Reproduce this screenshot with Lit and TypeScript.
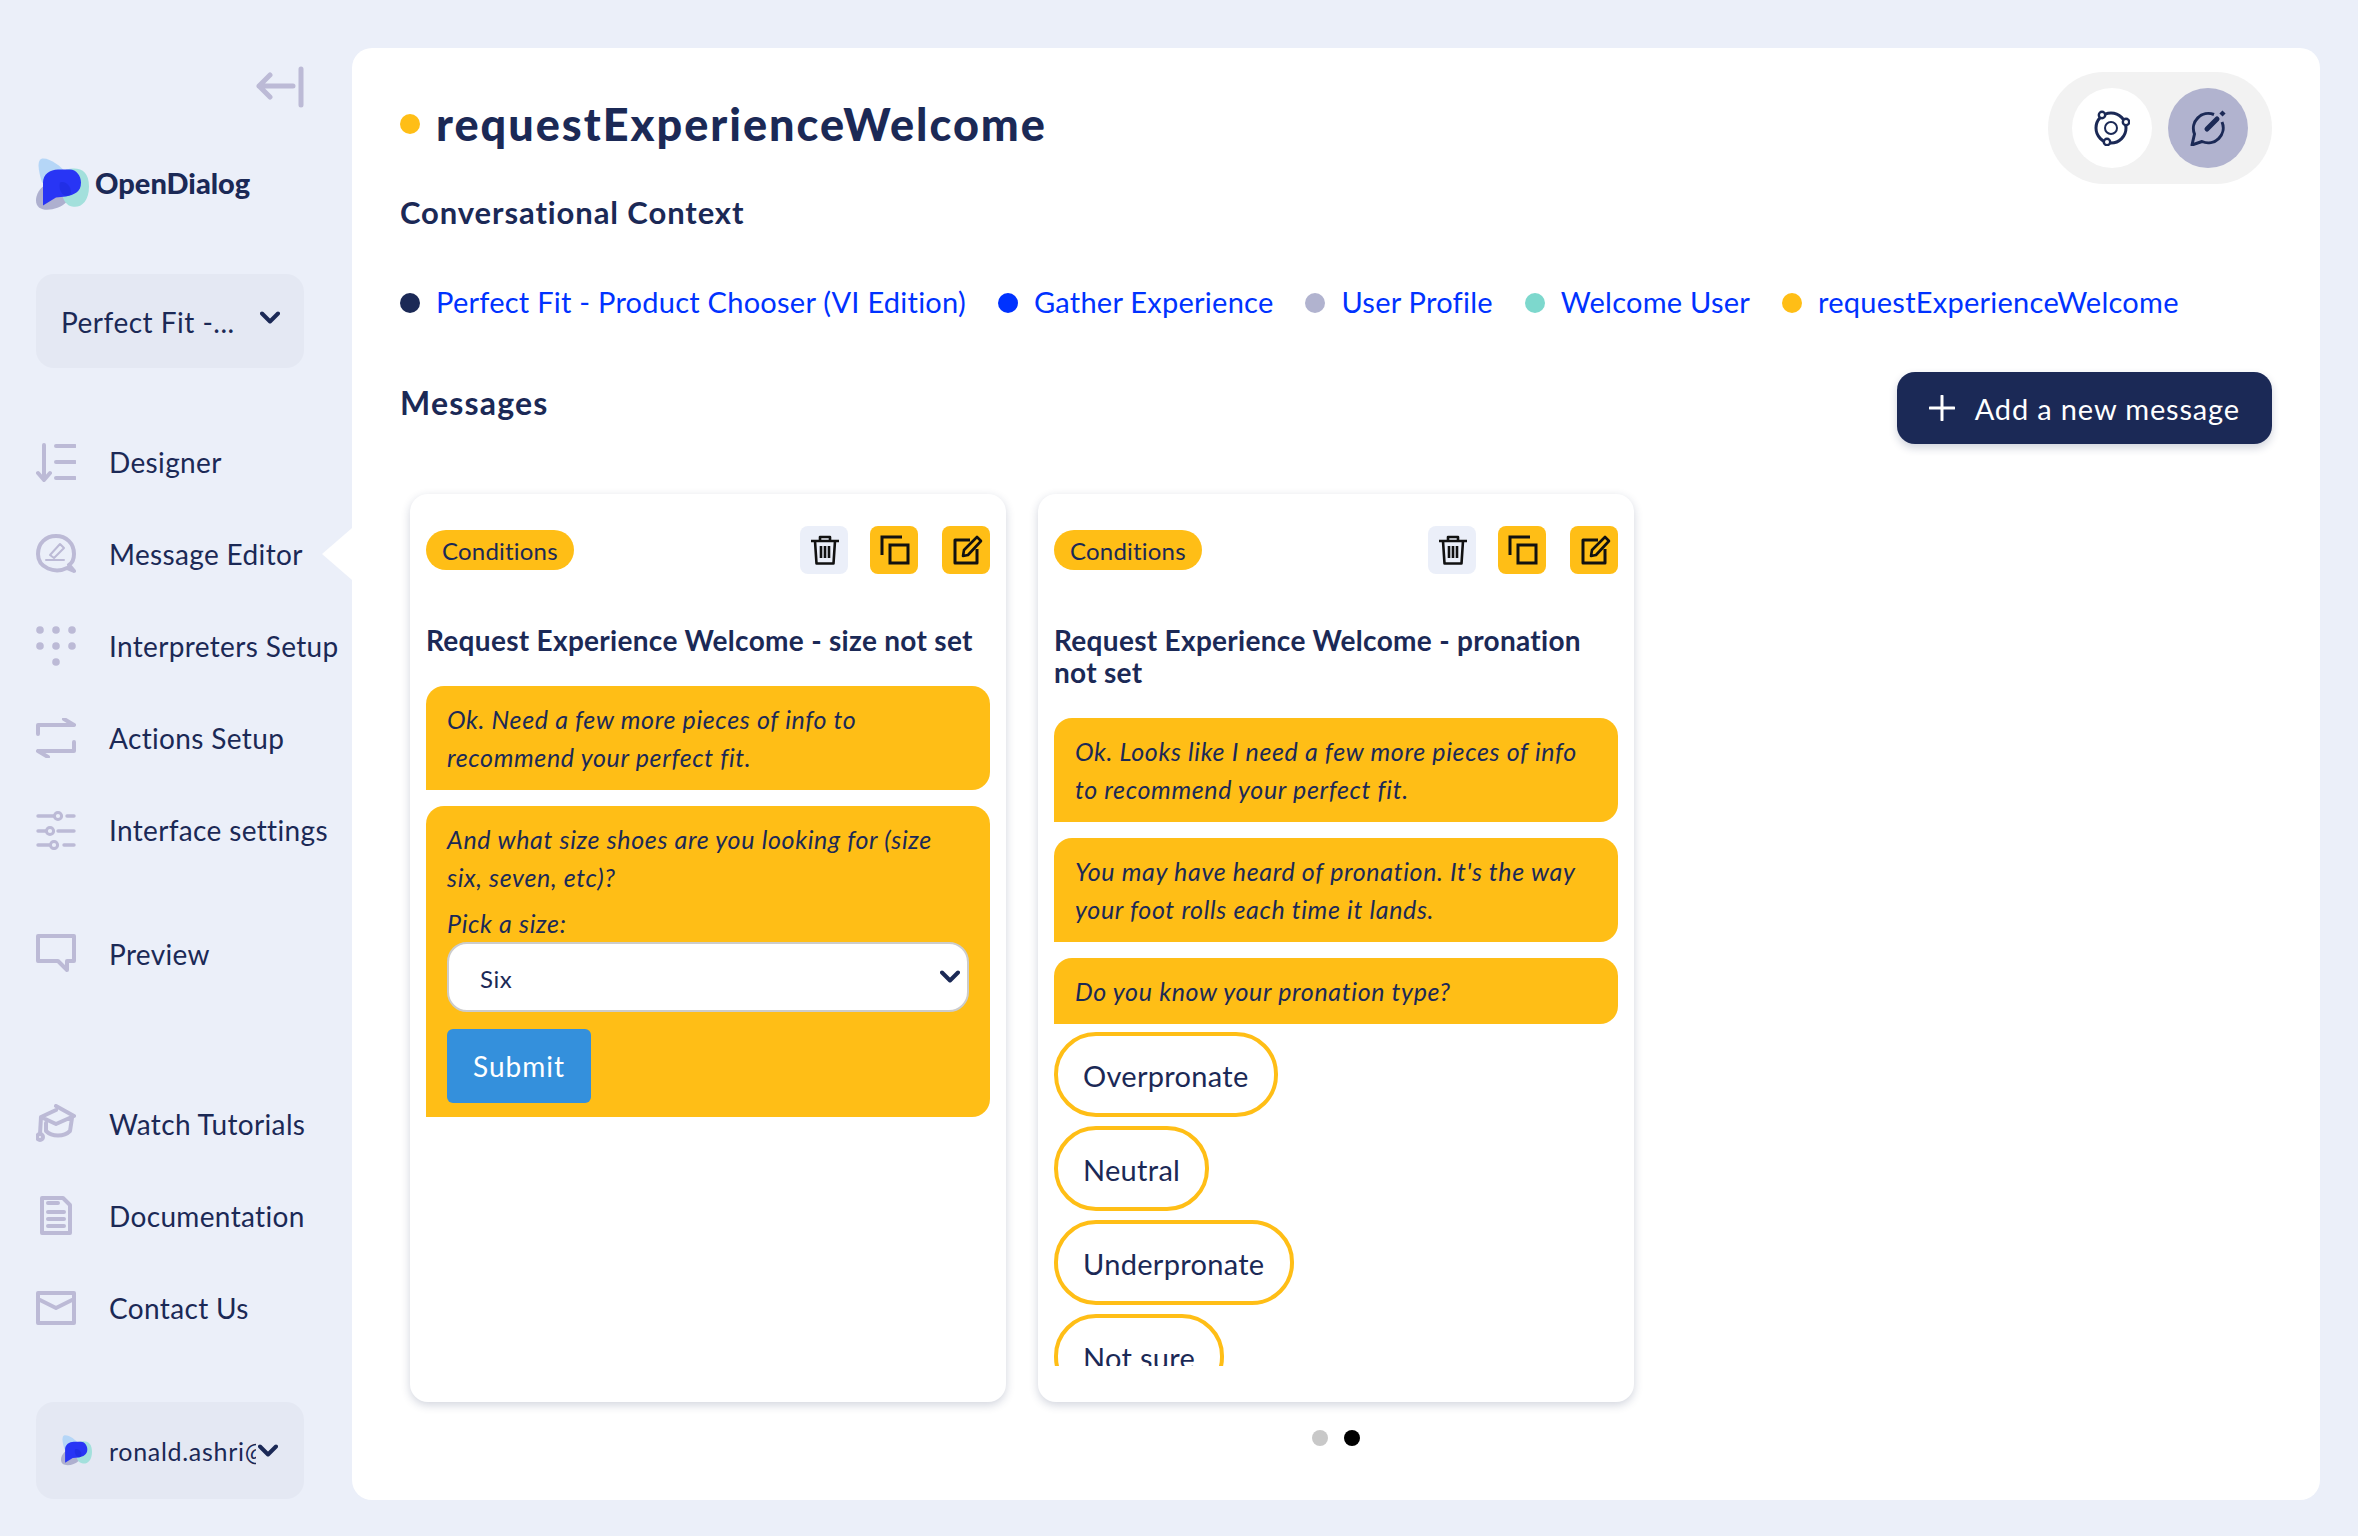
import { LitElement, html, svg, css } from 'lit';
import { customElement } from 'lit/decorators.js';

const logo = (size: number) => html`
  <svg width=${size} height=${size} viewBox="0 0 53 52">
    <path fill="#b5d6f7" d="M6 0C14-1 25 8 30 14L28 30 6 24C3 14 0 2 6 0Z" />
    <path fill="#aeb0cf" d="M0 42C0 30 14 20 24 24C34 28 36 38 30 44C22 52 0 56 0 42Z" />
    <path fill="#a3e0dc" d="M30 11C44 8 53 12 53 28C53 44 44 50 36 48C26 46 24 30 24 20Z" />
    <path fill="#2835f5" d="M7 30V24C7 16 14 11 22 11H34C40 11 45 17 45 24C45 34 38 36 30 38L20 39 7 47Z" />
    <path fill="#1e2de0" opacity=".7" d="M24 24C30 22 35 28 35 34C35 36 34 37 33 37C27 39 22 32 24 24Z" />
  </svg>
`;

const chevron = html`
  <svg width="20" height="13" viewBox="0 0 20 13" fill="none" stroke="#1b2956" stroke-width="4" stroke-linecap="round" stroke-linejoin="round">
    <path d="M2 2.5l8 8 8-8" />
  </svg>
`;

const navIcons: Record<string, unknown> = {
  designer: svg`<path d="M8 3V37M2 31l6 7 6-7M20 4H39M20 20H39M20 36H39" />`,
  editor: svg`<path d="M31 34C19 40 2 34 2 20C2 9 10 2 20 2C30 2 38 9 38 20C38 25 36 29 33 31L38 37Z" /><path stroke-width="2" d="M10 26H28M14 21L24 10 28 14 18 24Z" />`,
  interpreters: svg`<g fill="#bcbad6" stroke="none"><circle cx="4" cy="4" r="3.8" /><circle cx="20" cy="4" r="3.8" /><circle cx="36" cy="4" r="3.8" /><circle cx="4" cy="20" r="3.8" /><circle cx="20" cy="20" r="3.8" /><circle cx="36" cy="20" r="3.8" /><circle cx="20" cy="36" r="3.8" /></g>`,
  actions: svg`<path d="M2 16V7H38M28 1L38 7M38 24V33H2M2 33L12 39" />`,
  settings: svg`<path stroke-width="3.4" d="M2 6H18M31 6H38M2 21H10M22 21H38M2 35H13M28 35H38" /><circle cx="22" cy="6" r="3.6" stroke-width="3" /><circle cx="14" cy="21" r="3.6" stroke-width="3" /><circle cx="18" cy="35" r="3.6" stroke-width="3" />`,
  preview: svg`<path d="M2 2H38V27H31V36L22 27H2Z" />`,
  tutorials: svg`<path d="M20 2L38 12 20 20 5 13 20 6M5 13L4 30M10 19V27C16 33 28 33 34 27L36 14" /><circle cx="4" cy="33" r="3" />`,
  docs: svg`<path d="M6 2H27L34 9V37H6ZM12 7H22M12 16H28M12 23H28M12 30H28" />`,
  contact: svg`<path d="M2 5H38V35H2ZM2 11L20 20 38 11" />`,
};

const navItem = (icon: string, label: string) => html`
  <div class="nav-item">
    <svg class="nav-icon" viewBox="0 0 40 40" fill="none" stroke="#bcbad6" stroke-width="4" stroke-linecap="round" stroke-linejoin="round">${navIcons[icon]}</svg>
    <span>${label}</span>
  </div>
`;

@customElement('od-sidebar')
export class OdSidebar extends LitElement {
  static styles = css`
    :host {
      display: flex;
      flex-direction: column;
      width: 352px;
      flex: none;
      padding-top: 66px;
      box-sizing: border-box;
      position: relative;
      color: #1b2956;
    }
    .collapse {
      width: 48px;
      height: 42px;
      margin-left: 256px;
    }
    .brand {
      display: flex;
      align-items: center;
      gap: 6px;
      margin: 50px 0 0 36px;
      height: 52px;
    }
    .brand span {
      font-size: 29px;
      font-weight: 900;
      margin-top: -3px;
    }
    .picker {
      display: flex;
      align-items: center;
      width: 268px;
      margin-left: 36px;
      background: #e4e8f3;
      border-radius: 18px;
      box-sizing: border-box;
    }
    .project {
      height: 94px;
      margin-top: 64px;
      padding: 1px 24px 0 25px;
      justify-content: space-between;
      font-size: 28px;
      letter-spacing: 0.5px;
    }
    .project svg {
      margin-top: -8px;
    }
    nav {
      margin-top: 48px;
    }
    .nav-item {
      display: flex;
      align-items: center;
      height: 92px;
      padding-left: 36px;
      font-size: 28px;
      letter-spacing: 0.35px;
      white-space: nowrap;
    }
    .nav-icon {
      width: 40px;
      height: 40px;
      flex: none;
      margin-right: 33px;
    }
    .gap-preview {
      margin-top: 32px;
    }
    .gap-help {
      margin-top: 78px;
    }
    .pointer {
      position: absolute;
      top: 528px;
      right: 0;
      width: 0;
      height: 0;
      border-top: 26px solid transparent;
      border-bottom: 26px solid transparent;
      border-right: 30px solid #fff;
    }
    .user {
      height: 97px;
      margin-top: 48px;
      padding-left: 25px;
      font-size: 25px;
      letter-spacing: 0.7px;
    }
    .user .mail {
      width: 147px;
      margin-left: 17px;
      overflow: hidden;
      white-space: nowrap;
    }
    .user .chev {
      margin-left: 2px;
      display: flex;
    }
  `;

  render() {
    return html`
      <svg class="collapse" viewBox="0 0 48 42" fill="none" stroke="#bcbad6" stroke-width="5" stroke-linecap="round" stroke-linejoin="round">
        <path d="M3 20H37M14 9L3 20 14 31M45 3V39" />
      </svg>
      <div class="brand">${logo(53)}<span>OpenDialog</span></div>
      <div class="picker project"><span>Perfect Fit -...</span>${chevron}</div>
      <nav>
        ${navItem('designer', 'Designer')}
        ${navItem('editor', 'Message Editor')}
        ${navItem('interpreters', 'Interpreters Setup')}
        ${navItem('actions', 'Actions Setup')}
        ${navItem('settings', 'Interface settings')}
        <div class="gap-preview">${navItem('preview', 'Preview')}</div>
        <div class="gap-help">
          ${navItem('tutorials', 'Watch Tutorials')}
          ${navItem('docs', 'Documentation')}
          ${navItem('contact', 'Contact Us')}
        </div>
      </nav>
      <div class="pointer"></div>
      <div class="picker user">
        ${logo(31)}
        <div class="mail">ronald.ashri@</div>
        <span class="chev">${chevron}</span>
      </div>
    `;
  }
}

const trashIcon = html`
  <svg class="nudge-s" width="30" height="30" viewBox="0 0 30 30" fill="none" stroke="#111" stroke-width="2.6" stroke-linejoin="round">
    <path d="M1 6H29M10 6V2H20V6M5 6L6.5 28.5H23.5L25 6M11 11V23M15 11V23M19 11V23" />
  </svg>
`;
const copyIcon = html`
  <svg class="nudge-s" width="30" height="30" viewBox="0 0 30 30" fill="none" stroke="#111" stroke-width="3">
    <path d="M2 20V2H22M10 10H28V28H10Z" />
  </svg>
`;
const editIcon = html`
  <svg class="nudge" width="30" height="30" viewBox="0 0 30 30" fill="none" stroke="#111" stroke-width="3" stroke-linejoin="round">
    <path d="M17 5H2V28H24V14" />
    <path stroke-width="2.6" d="M10 21L11 15 24 2 28 6 15 20Z" />
  </svg>
`;

const cardHead = html`
  <div class="head">
    <span class="badge">Conditions</span>
    <span class="tools">
      <button class="tool plain">${trashIcon}</button>
      <button class="tool">${copyIcon}</button>
      <button class="tool last">${editIcon}</button>
    </span>
  </div>
`;

@customElement('app-root')
export class AppRoot extends LitElement {
  static styles = css`
    :host {
      display: flex;
      width: 2358px;
      height: 1536px;
      overflow: hidden;
      background: #ebeff9;
      font-family: Lato, 'Noto Sans', sans-serif;
      color: #1b2956;
    }
    main {
      flex: none;
      width: 1968px;
      height: 1452px;
      margin-top: 48px;
      padding: 24px 48px 0;
      box-sizing: border-box;
      background: #fff;
      border-radius: 20px;
    }
    .top {
      display: flex;
      justify-content: space-between;
      align-items: flex-start;
    }
    .title {
      display: flex;
      align-items: center;
      gap: 16px;
      height: 104px;
      margin: 0;
      font-size: 45px;
      font-weight: 900;
      letter-spacing: 2px;
    }
    .dot {
      width: 20px;
      height: 20px;
      border-radius: 50%;
      flex: none;
    }
    h2 {
      margin: 0;
      font-size: 31px;
      font-weight: 700;
      letter-spacing: 0.9px;
    }
    .context {
      margin-top: 16px;
      line-height: 40px;
    }
    .toggle {
      display: flex;
      gap: 16px;
      padding: 16px 24px;
      background: #f2f2f2;
      border-radius: 56px;
    }
    .toggle div {
      display: flex;
      align-items: center;
      justify-content: center;
      width: 80px;
      height: 80px;
      border-radius: 50%;
      background: #fff;
    }
    .toggle div.on {
      background: #b1b3cf;
    }
    .crumbs {
      display: flex;
      align-items: center;
      height: 40px;
      margin-top: 51px;
      font-size: 29px;
      letter-spacing: 0.25px;
      color: #0032ff;
      white-space: nowrap;
    }
    .crumbs span {
      margin-top: -3px;
    }
    .crumbs .dot {
      margin-right: 16px;
    }
    .crumbs span + .dot {
      margin-left: 32px;
    }
    .messages {
      display: flex;
      justify-content: space-between;
      align-items: flex-start;
      margin-top: 49px;
    }
    .messages h2 {
      line-height: 62px;
      font-size: 32px;
      letter-spacing: 1.2px;
    }
    .add {
      display: flex;
      align-items: center;
      gap: 20px;
      height: 72px;
      padding: 0 32px;
      border: 0;
      border-radius: 18px;
      background: #1b2956;
      color: #fff;
      font: inherit;
      font-size: 29px;
      letter-spacing: 0.85px;
      box-shadow: 0 4px 8px rgba(27, 41, 86, 0.2);
    }
    .cards {
      display: flex;
      gap: 32px;
      margin: 50px 0 0 10px;
    }
    .card {
      display: flex;
      flex-direction: column;
      width: 596px;
      height: 908px;
      padding: 32px 16px 36px;
      box-sizing: border-box;
      border-radius: 18px;
      background: #fff;
      box-shadow: 0 3px 10px rgba(27, 41, 86, 0.2);
    }
    .head {
      display: flex;
      justify-content: space-between;
      align-items: center;
      height: 48px;
    }
    .badge {
      display: flex;
      align-items: center;
      height: 40px;
      padding: 0 16px;
      border-radius: 20px;
      background: #ffbe16;
      font-size: 24px;
      letter-spacing: 0.2px;
    }
    .tools {
      display: flex;
      gap: 22px;
    }
    .tool {
      display: flex;
      align-items: center;
      justify-content: center;
      width: 48px;
      height: 48px;
      padding: 0;
      border: 0;
      border-radius: 8px;
      background: #ffbe16;
    }
    .tool.plain {
      background: #ebeff9;
    }
    .tool.last {
      margin-left: 2px;
    }
    .nudge {
      margin-left: 4px;
    }
    .nudge-s {
      margin-left: 2px;
    }
    .body {
      flex: 1;
      min-height: 0;
      margin-top: 50px;
      overflow: hidden;
    }
    h3 {
      margin: 0 0 30px;
      font-size: 28px;
      line-height: 32px;
      font-weight: 700;
      letter-spacing: 0.3px;
    }
    .bubble {
      margin-bottom: 16px;
      padding: 14px 21px 14px;
      border-radius: 18px 18px 18px 0;
      background: #ffbe16;
      font-size: 25px;
      line-height: 38px;
      font-style: italic;
      letter-spacing: 0.65px;
    }
    .label {
      margin-top: 8px;
    }
    .select {
      display: flex;
      align-items: center;
      justify-content: space-between;
      height: 70px;
      padding: 3px 7px 0 31px;
      box-sizing: border-box;
      border: 2px solid #ccc;
      border-radius: 20px;
      background: #fff;
      font-size: 24px;
      font-style: normal;
      letter-spacing: 0.5px;
    }
    .select svg {
      margin-top: -5px;
    }
    .submit {
      display: block;
      width: 144px;
      height: 74px;
      margin-top: 17px;
      border: 0;
      border-radius: 6px;
      background: #3490dc;
      color: #fff;
      font: inherit;
      font-style: normal;
      font-size: 28px;
      letter-spacing: 1px;
    }
    .answers {
      display: flex;
      flex-direction: column;
      align-items: flex-start;
      gap: 9px;
      margin-top: -8px;
    }
    .answer {
      display: flex;
      align-items: center;
      flex: none;
      height: 85px;
      padding: 2px 25px 0;
      box-sizing: border-box;
      border: 4px solid #ffbe16;
      border-radius: 42px;
      font-size: 29px;
      letter-spacing: 0.3px;
    }
    .pager {
      display: flex;
      justify-content: center;
      gap: 16px;
      margin-top: 28px;
    }
    .pager i {
      width: 16px;
      height: 16px;
      border-radius: 50%;
      background: #c8c8c8;
    }
    .pager i.on {
      background: #000;
    }
  `;

  render() {
    const crumbs = [
      ['#1b2956', 'Perfect Fit - Product Chooser (VI Edition)'],
      ['#0032ff', 'Gather Experience'],
      ['#b1b3cf', 'User Profile'],
      ['#7dd8cd', 'Welcome User'],
      ['#ffbe16', 'requestExperienceWelcome'],
    ];
    return html`
      <od-sidebar></od-sidebar>
      <main>
        <div class="top">
          <div>
            <h1 class="title"><i class="dot" style="background:#ffbe16"></i>requestExperienceWelcome</h1>
            <h2 class="context">Conversational Context</h2>
          </div>
          <div class="toggle">
            <div>
              <svg width="36" height="36" viewBox="0 0 36 36" fill="none" stroke="#1b2956" stroke-width="3">
                <circle cx="17" cy="18" r="15" />
                <circle cx="17" cy="18" r="6" stroke-width="2" />
                <circle cx="8" cy="5" r="3.2" fill="#fff" stroke-width="2.4" />
                <circle cx="32" cy="12" r="3.2" fill="#fff" stroke-width="2.4" />
                <circle cx="13" cy="32" r="3.2" fill="#fff" stroke-width="2.4" />
              </svg>
            </div>
            <div class="on">
              <svg width="36" height="36" viewBox="0 0 36 36" fill="none" stroke="#1b2956" stroke-width="3" stroke-linejoin="round">
                <path d="M24 4.5A15 15 0 0 0 4.5 24L2 35 12 31.5A15 15 0 0 0 32 12" />
                <path stroke-width="5" stroke-linecap="round" d="M17 19L27 9" />
                <path stroke-width="4.5" d="M31 5L34 2" />
              </svg>
            </div>
          </div>
        </div>
        <div class="crumbs">
          ${crumbs.map(([color, label]) => html`<i class="dot" style="background:${color}"></i><span>${label}</span>`)}
        </div>
        <div class="messages">
          <h2>Messages</h2>
          <button class="add">
            <svg width="26" height="26" viewBox="0 0 26 26" stroke="#fff" stroke-width="3" stroke-linecap="round"><path d="M13 1V25M1 13H25" /></svg>
            Add a new message
          </button>
        </div>
        <div class="cards">
          <section class="card">
            ${cardHead}
            <div class="body">
              <h3>Request Experience Welcome - size not set</h3>
              <div class="bubble">Ok. Need a few more pieces of info to<br />recommend your perfect fit.</div>
              <div class="bubble">
                And what size shoes are you looking for (size<br />six, seven, etc)?
                <div class="label">Pick a size:</div>
                <div class="select"><span>Six</span>${chevron}</div>
                <button class="submit">Submit</button>
              </div>
            </div>
          </section>
          <section class="card">
            ${cardHead}
            <div class="body">
              <h3>Request Experience Welcome - pronation<br />not set</h3>
              <div class="bubble">Ok. Looks like I need a few more pieces of info<br />to recommend your perfect fit.</div>
              <div class="bubble">You may have heard of pronation. It's the way<br />your foot rolls each time it lands.</div>
              <div class="bubble">Do you know your pronation type?</div>
              <div class="answers">
                <div class="answer">Overpronate</div>
                <div class="answer">Neutral</div>
                <div class="answer">Underpronate</div>
                <div class="answer">Not sure</div>
              </div>
            </div>
          </section>
        </div>
        <div class="pager"><i></i><i class="on"></i></div>
      </main>
    `;
  }
}
